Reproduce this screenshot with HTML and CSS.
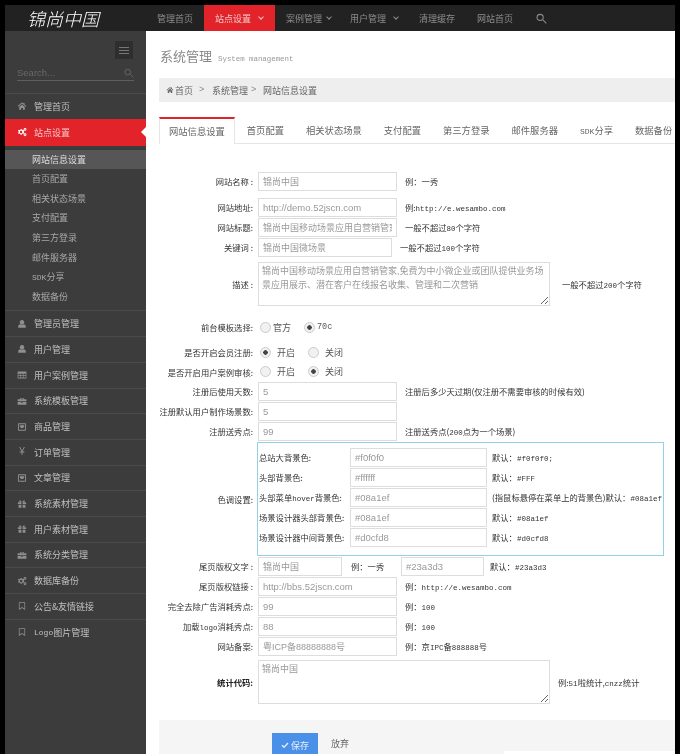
FILE: index.html
```html
<!DOCTYPE html>
<html lang="zh">
<head>
<meta charset="utf-8">
<title>系统管理</title>
<link rel="stylesheet" href="styles.css">
</head>
<body>
<svg class="defs" width="0" height="0">
  <symbol id="i-home" viewBox="0 0 16 16"><path d="M8 2 1 8l1 1 6-5 6 5 1-1-3-2.6V3h-2v1z"/><path d="M3.500 9.500 8 5.700l4.500 3.800V14H9.500v-3h-3v3h-3z"/></symbol>
  <symbol id="i-cogs" viewBox="0 0 16 16"><path fill-rule="evenodd" d="M6 3.500 7.500 3l.8 1.500 1.400.6 1.300-.6.900 1.400-1 1v1.600l1 1-.9 1.400-1.300-.6-1.400.6-.8 1.500H5.500l-.3-1.500-1.400-.6-1.300.6-.9-1.400 1-1V6.900l-1-1 .9-1.400 1.300.6 1.400-.6zM6.500 6a2 2 0 1 0 .1 4 2 2 0 0 0-.1-4z"/><path fill-rule="evenodd" d="M12.800 1.500a2.300 2.300 0 1 1 0 4.600 2.300 2.300 0 0 1 0-4.600zm0 1.500a.8.8 0 1 0 0 1.600.8.8 0 0 0 0-1.600zM12.800 10a2.300 2.300 0 1 1 0 4.600 2.300 2.300 0 0 1 0-4.600zm0 1.500a.8.8 0 1 0 0 1.600.8.8 0 0 0 0-1.600z"/></symbol>
  <symbol id="i-user" viewBox="0 0 16 16"><circle cx="8" cy="5" r="3.500"/><path d="M2 14v-2.500C2 9.500 3.500 8.500 5 8.200c1.800 1 4.200 1 6 0 1.500.3 3 1.300 3 3.300V14z"/></symbol>
  <symbol id="i-table" viewBox="0 0 16 16"><path fill-rule="evenodd" d="M1 2.500h14v11H1zM2 6v2h3.500V6zm4.500 0v2h3V6zm4 0v2H14V6zM2 9v3h3.500V9zm4.500 0v3h3V9zm4 0v3H14V9z"/></symbol>
  <symbol id="i-case" viewBox="0 0 16 16"><path fill-rule="evenodd" d="M1 5h4V3h6v2h4v3.500H1zM6 4v1h4V4zM1 9.500h6V11h2V9.500h6V14H1z"/></symbol>
  <symbol id="i-inbox" viewBox="0 0 16 16"><path fill-rule="evenodd" d="M3 2h10a1.500 1.500 0 0 1 1.500 1.500v9A1.500 1.500 0 0 1 13 14H3a1.500 1.500 0 0 1-1.500-1.500v-9A1.500 1.500 0 0 1 3 2zm0 1.500v9h10v-9z"/><path d="M4.500 5h7v2.500l-2 2h-3l-2-2z"/></symbol>
  <symbol id="i-gift" viewBox="0 0 16 16"><path d="M1.500 5H7v3H1.500zM9 5h5.500v3H9zM2.500 9H7v5H2.500zM9 9h4.500v5H9z"/><path d="M8 5 5 2h-1L3.500 4l2 1zM8 5l3-3h1l.5 2-2 1z"/></symbol>
  <symbol id="i-mark" viewBox="0 0 16 16"><path fill-rule="evenodd" d="M3 2h10v12.500l-5-3.500-5 3.500zm1.200 1.200v8.900L8 9.500l3.800 2.600V3.200z"/></symbol>
  <symbol id="i-search" viewBox="0 0 16 16"><path fill="none" stroke="currentColor" stroke-width="1.500" d="M10.500 6.500a4.500 4.500 0 1 1-9 0 4.500 4.500 0 0 1 9 0zM10 10l5 5"/></symbol>
</svg>
<div class="app">
  <header class="top">
    <div class="logo">锦尚中国</div>
    <nav class="nav">
      <a class="nav-item">管理首页</a>
      <a class="nav-item on">站点设置<i class="chev"></i></a>
      <a class="nav-item case">案例管理<i class="chev"></i></a>
      <a class="nav-item user">用户管理<i class="chev"></i></a>
      <a class="nav-item">清理缓存</a>
      <a class="nav-item">网站首页</a>
      <a class="nav-item"><svg class="nav-search"><use href="#i-search"/></svg></a>
    </nav>
  </header>
  <div class="body">
    <aside class="side">
      <div class="side-tool"><span class="burger"><b></b><b></b><b></b></span></div>
      <div class="side-search"><span>Search...</span><svg class="side-glass"><use href="#i-search"/></svg></div>
      <ul class="menu">
        <li class="menu-item"><svg class="ico"><use href="#i-home"/></svg>管理首页</li>
        <li class="menu-item active"><svg class="ico"><use href="#i-cogs"/></svg>站点设置</li>
        <li class="subs">
          <a class="sub cur">网站信息设置</a>
          <a class="sub">首页配置</a>
          <a class="sub">相关状态场景</a>
          <a class="sub">支付配置</a>
          <a class="sub">第三方登录</a>
          <a class="sub">邮件服务器</a>
          <a class="sub"><span class="en">SDK</span>分享</a>
          <a class="sub">数据备份</a>
        </li>
        <li class="menu-item"><svg class="ico"><use href="#i-user"/></svg>管理员管理</li>
        <li class="menu-item"><svg class="ico"><use href="#i-user"/></svg>用户管理</li>
        <li class="menu-item"><svg class="ico"><use href="#i-table"/></svg>用户案例管理</li>
        <li class="menu-item"><svg class="ico"><use href="#i-case"/></svg>系统模板管理</li>
        <li class="menu-item"><svg class="ico"><use href="#i-inbox"/></svg>商品管理</li>
        <li class="menu-item"><span class="ico yen">¥</span>订单管理</li>
        <li class="menu-item"><svg class="ico"><use href="#i-inbox"/></svg>文章管理</li>
        <li class="menu-item"><svg class="ico"><use href="#i-gift"/></svg>系统素材管理</li>
        <li class="menu-item"><svg class="ico"><use href="#i-gift"/></svg>用户素材管理</li>
        <li class="menu-item"><svg class="ico"><use href="#i-case"/></svg>系统分类管理</li>
        <li class="menu-item"><svg class="ico"><use href="#i-cogs"/></svg>数据库备份</li>
        <li class="menu-item"><svg class="ico"><use href="#i-mark"/></svg>公告&amp;友情链接</li>
        <li class="menu-item"><svg class="ico"><use href="#i-mark"/></svg><span class="en">Logo</span>图片管理</li>
      </ul>
    </aside>
    <main class="main">
      <div class="title"><h1>系统管理</h1><small>System management</small></div>
      <div class="crumb">
        <svg class="crumb-home"><use href="#i-home"/></svg><span>首页</span><i class="sep">&gt;</i><span>系统管理</span><i class="sep near">&gt;</i><span>网站信息设置</span>
      </div>
      <div class="tabs">
        <a class="tab on">网站信息设置</a>
        <a class="tab">首页配置</a>
        <a class="tab">相关状态场景</a>
        <a class="tab">支付配置</a>
        <a class="tab">第三方登录</a>
        <a class="tab">邮件服务器</a>
        <a class="tab"><span class="en">SDK</span>分享</a>
        <a class="tab">数据备份</a>
      </div>
      <form class="form">
        <div class="row"><label>网站名称 :</label><input class="inp cn" value="锦尚中国"><span class="hint">例：一秀</span></div>
        <div class="row gap-6"><label>网站地址:</label><input class="inp" value="http://demo.52jscn.com"><span class="hint">例:<span class="en">http://e.wesambo.com</span></span></div>
        <div class="row"><label>网站标题:</label><input class="inp cn" value="锦尚中国移动场景应用自营销管家"><span class="hint">一般不超过<span class="en">80</span>个字符</span></div>
        <div class="row"><label>关键词 :</label><input class="inp cn kw" value="锦尚中国微场景"><span class="hint">一般不超过<span class="en">100</span>个字符</span></div>
        <div class="row area gap-5"><label>描述 :</label><textarea class="inp cn big">锦尚中国移动场景应用自营销管家,免费为中小微企业或团队提供业务场景应用展示、潜在客户在线报名收集、管理和二次营销</textarea><span class="hint">一般不超过<span class="en">200</span>个字符</span></div>
        <div class="row gap-11"><label>前台模板选择:</label><span class="opts tight"><label class="opt"><input type="radio" name="tpl" class="radio">官方</label><label class="opt"><input type="radio" name="tpl" class="radio" checked><span class="en">70c</span></label></span></div>
        <div class="row gap-5"><label>是否开启会员注册:</label><span class="opts"><label class="opt"><input type="radio" name="reg" class="radio" checked>开启</label><label class="opt"><input type="radio" name="reg" class="radio">关闭</label></span></div>
        <div class="row short-row"><label>是否开启用户案例审核:</label><span class="opts"><label class="opt"><input type="radio" name="chk" class="radio">开启</label><label class="opt"><input type="radio" name="chk" class="radio" checked>关闭</label></span></div>
        <div class="row"><label>注册后使用天数:</label><input class="inp" value="5"><span class="hint">注册后多少天过期(仅注册不需要审核的时候有效)</span></div>
        <div class="row"><label>注册默认用户制作场景数:</label><input class="inp" value="5"></div>
        <div class="row"><label>注册送秀点:</label><input class="inp" value="99"><span class="hint">注册送秀点(<span class="en">200</span>点为一个场景)</span></div>
        <div class="row color-row"><label>色调设置:</label>
          <div class="colors">
            <div class="c-row"><span class="c-name">总站大背景色:</span><input class="inp c-inp" value="#f0f0f0"><span class="c-hint">默认：<span class="en">#f0f0f0;</span></span></div>
            <div class="c-row"><span class="c-name">头部背景色:</span><input class="inp c-inp" value="#ffffff"><span class="c-hint">默认：<span class="en">#FFF</span></span></div>
            <div class="c-row"><span class="c-name">头部菜单<span class="en">hover</span>背景色:</span><input class="inp c-inp" value="#08a1ef"><span class="c-hint">(指鼠标悬停在菜单上的背景色)默认：<span class="en">#08a1ef</span></span></div>
            <div class="c-row"><span class="c-name">场景设计器头部背景色:</span><input class="inp c-inp" value="#08a1ef"><span class="c-hint">默认：<span class="en">#08a1ef</span></span></div>
            <div class="c-row"><span class="c-name">场景设计器中间背景色:</span><input class="inp c-inp" value="#d0cfd8"><span class="c-hint">默认：<span class="en">#d0cfd8</span></span></div>
          </div>
        </div>
        <div class="row"><label>尾页版权文字 :</label><input class="inp cn short" value="锦尚中国"><span class="hint mid">例：一秀</span><input class="inp short2" value="#23a3d3"><span class="hint last">默认：<span class="en">#23a3d3</span></span></div>
        <div class="row"><label>尾页版权链接 :</label><input class="inp" value="http://bbs.52jscn.com"><span class="hint">例：<span class="en">http://e.wesambo.com</span></span></div>
        <div class="row"><label>完全去除广告消耗秀点:</label><input class="inp" value="99"><span class="hint">例：<span class="en">100</span></span></div>
        <div class="row"><label>加载<span class="en">logo</span>消耗秀点:</label><input class="inp" value="88"><span class="hint">例：<span class="en">100</span></span></div>
        <div class="row"><label>网站备案:</label><input class="inp cn" value="粤ICP备88888888号"><span class="hint">例：京<span class="en">IPC</span>备<span class="en">888888</span>号</span></div>
        <div class="row area gap-4"><label class="strong">统计代码:</label><textarea class="inp cn big">锦尚中国</textarea><span class="hint tail">例:<span class="en">51</span>啦统计,<span class="en">cnzz</span>统计</span></div>
        <div class="actions"><button type="button" class="save"><svg class="check" viewBox="0 0 12 12"><path d="M1.500 6.500 4.500 9.500 10.500 3" fill="none" stroke="currentColor" stroke-width="2"/></svg>保存</button><a class="cancel">放弃</a></div>
      </form>
    </main>
  </div>
</div>
</body>
</html>
```
FILE: styles.css
```css
* { box-sizing: border-box; }
html, body { margin: 0; height: 754px; overflow: hidden; }
body { background: #000; padding: 5px 5px 0; font-family: "Noto Sans CJK SC", "Liberation Sans", sans-serif; font-size: 9px; color: #444; }
.defs { position: absolute; }
svg { fill: currentColor; }
a { color: inherit; text-decoration: none; }
ul { list-style: none; margin: 0; padding: 0; }
i { font-style: normal; }

.app { height: 749px; display: flex; flex-direction: column; filter: blur(0.35px); }
.top { height: 26px; flex: none; background: #222; display: flex; color: #8d8d8d; }
.logo { width: 141px; padding-left: 22px; color: #fff; font-size: 18px; line-height: 26px; font-weight: 300; font-style: italic; }
.nav { display: flex; }
.nav-item { display: flex; align-items: center; padding: 0 11px; font-size: 9px; white-space: nowrap; }
.nav-item.on { background: #e2232a; color: #f0c8c8; width: 71px; }
.nav-item.case { padding-right: 8px; }
.nav-item.case .chev { margin-left: 5px; }
.nav-item.user { padding-right: 10px; }
.chev { width: 4px; height: 4px; border: solid currentColor; border-width: 0 1px 1px 0; transform: rotate(45deg); margin: -2px 0 0 8px; flex: none; }
.nav-search { width: 11px; height: 11px; margin-left: 1px; }

.body { flex: 1; display: flex; min-height: 0; }
.side { width: 141px; flex: none; background: #3c3c3c; color: #b5b5b5; }
.side-tool { height: 28px; display: flex; justify-content: flex-end; align-items: flex-end; padding-right: 13px; }
.burger { width: 18px; height: 18px; background: #2e2e2e; display: flex; flex-direction: column; gap: 2px; justify-content: center; align-items: center; }
.burger b { width: 10px; height: 1px; background: #777; }
.side-search { margin: 6px 12px 0; height: 16px; border-bottom: 1px solid #5f5f5f; display: flex; justify-content: space-between; align-items: center; font-family: "Liberation Sans", sans-serif; font-size: 9.500px; color: #686868; }
.side-glass { width: 10px; height: 10px; color: #666; }
.menu { margin-top: 12px; }
.menu-item { height: 25.700px; display: flex; align-items: center; padding-left: 12px; font-size: 9px; border-top: 1px solid #4a4a4a; color: #c0c0c0; }
.menu-item .en, .sub .en, .tab .en { font-size: 8px; }
.ico { width: 10px; height: 10px; margin-right: 7px; flex: none; color: #8f8f8f; }
.yen { font-family: "Liberation Sans", sans-serif; font-size: 10px; line-height: 10px; text-align: center; }
.menu-item.active { background: #e2232a; color: #f2c6c6; height: 27px; position: relative; border-top: 0; }
.menu-item.active .ico { color: #fff; }
.menu-item.active::after { content: ""; position: absolute; right: 0; top: 8px; border: 5px solid transparent; border-right-color: #fff; border-left-width: 0; }
.subs { padding: 4px 0; }
.sub { display: block; height: 19.600px; line-height: 19px; padding-left: 27px; color: #a8a8a8; font-size: 9px; }
.sub.cur { background: #565656; color: #ddd; }

.main { flex: 1; min-width: 0; background: #fff; padding-left: 13px; overflow: hidden; }
.title { height: 47px; padding: 16px 0 0 1px; display: flex; align-items: baseline; gap: 6px; }
.title h1 { margin: 0; font-size: 13px; line-height: 18px; font-weight: 400; color: #888; }
.title small { font-family: "Liberation Mono", monospace; font-size: 7.400px; color: #999; }
.crumb { height: 24px; background: #eee; display: flex; align-items: center; padding-left: 7px; color: #666; font-size: 9px; }
.crumb-home { width: 8px; height: 8px; margin-right: 1px; }
.sep { margin: 0 7.600px 0 6px; font-family: "Liberation Mono", monospace; color: #888; }
.sep.near { margin: 0 6.600px 0 3px; }
.tabs { margin-top: 15px; height: 27px; display: flex; gap: 2px; border-bottom: 1px solid #e6e6e6; white-space: nowrap; }
.tab { flex: none; padding: 0 10px; line-height: 26px; font-size: 9.300px; color: #666; }
.tab.on { border: solid #e6e6e6; border-width: 0 1px; border-top: 2px solid #d8262b; line-height: 24px; height: 27px; padding: 0 9px; background: #fff; }

.form { display: flex; flex-direction: column; padding-top: 27px; }
.row { height: 20px; display: flex; align-items: center; font-size: 8.300px; color: #333; flex: none; }
.row > label:first-child { width: 94px; margin-right: 5px; text-align: right; white-space: nowrap; flex: none; }
.short-row { height: 19px; }
.gap-4 { margin-top: 4px; }
.gap-5 { margin-top: 5px; }
.gap-6 { margin-top: 6px; }
.gap-11 { margin-top: 11px; }
.en { font-family: "Liberation Mono", monospace; font-size: 7.500px; }
.inp { width: 139px; height: 19px; border: 1px solid #ddd; padding: 0 4px; font-family: "Liberation Sans", "Noto Sans CJK SC", sans-serif; font-size: 9.500px; color: #999; background: #fff; outline: 0; flex: none; }
.inp.cn { font-size: 9px; }
.kw { width: 134px; }
.hint { margin-left: 8px; white-space: nowrap; }
.area { height: 44px; }
.big { width: 292px; height: 44px; resize: both; line-height: 14px; padding: 1px 3px; display: block; }
.area .hint { margin-left: 12px; }
.area .hint.tail { margin-left: 8px; }
.strong { font-weight: 700; color: #222; }
.opts { display: flex; gap: 13px; padding-left: 2px; font-size: 9px; }
.opt { display: flex; align-items: center; gap: 6px; color: #555; }
.opt .en { font-size: 8.500px; }
.opts.tight .opt { gap: 2px; }
.radio { appearance: none; width: 11px; height: 11px; margin: 0; border-radius: 50%; border: 1px solid #ccc; background: #f1f1f1; }
.radio:checked { background: radial-gradient(circle, #444 0 2px, #f1f1f1 2.500px); }
.color-row { height: 115px; align-items: flex-end; }
.color-row > label:first-child { align-self: center; }
.colors { width: 407px; height: 114px; margin-left: -1px; border: 1px solid #92d2e6; padding: 4px 0 0 1px; flex: none; overflow: hidden; }
.c-row { height: 20px; display: flex; align-items: center; white-space: nowrap; }
.c-name { width: 91px; flex: none; }
.c-inp { width: 137px; }
.c-hint { margin-left: 5px; }
.short { width: 84px; }
.short2 { width: 83px; margin-left: 17px; }
.hint.mid { margin-left: 9px; width: 33px; }
.hint.last { margin-left: 6px; }
.actions { position: relative; margin-top: 16px; height: 60px; background: #f5f5f5; padding: 13px 0 0 113px; display: flex; align-items: flex-start; gap: 13px; }
.actions::after { content: ""; position: absolute; left: 345px; right: 0; top: 31px; height: 10px; background: #fff; }
.save { width: 46px; height: 24px; border: 0; background: #4a90e8; color: #e6f0ff; font: inherit; font-size: 9px; display: flex; align-items: center; justify-content: center; gap: 2px; padding: 0; }
.check { width: 8px; height: 8px; }
.cancel { line-height: 22px; color: #666; font-size: 9px; }
```
